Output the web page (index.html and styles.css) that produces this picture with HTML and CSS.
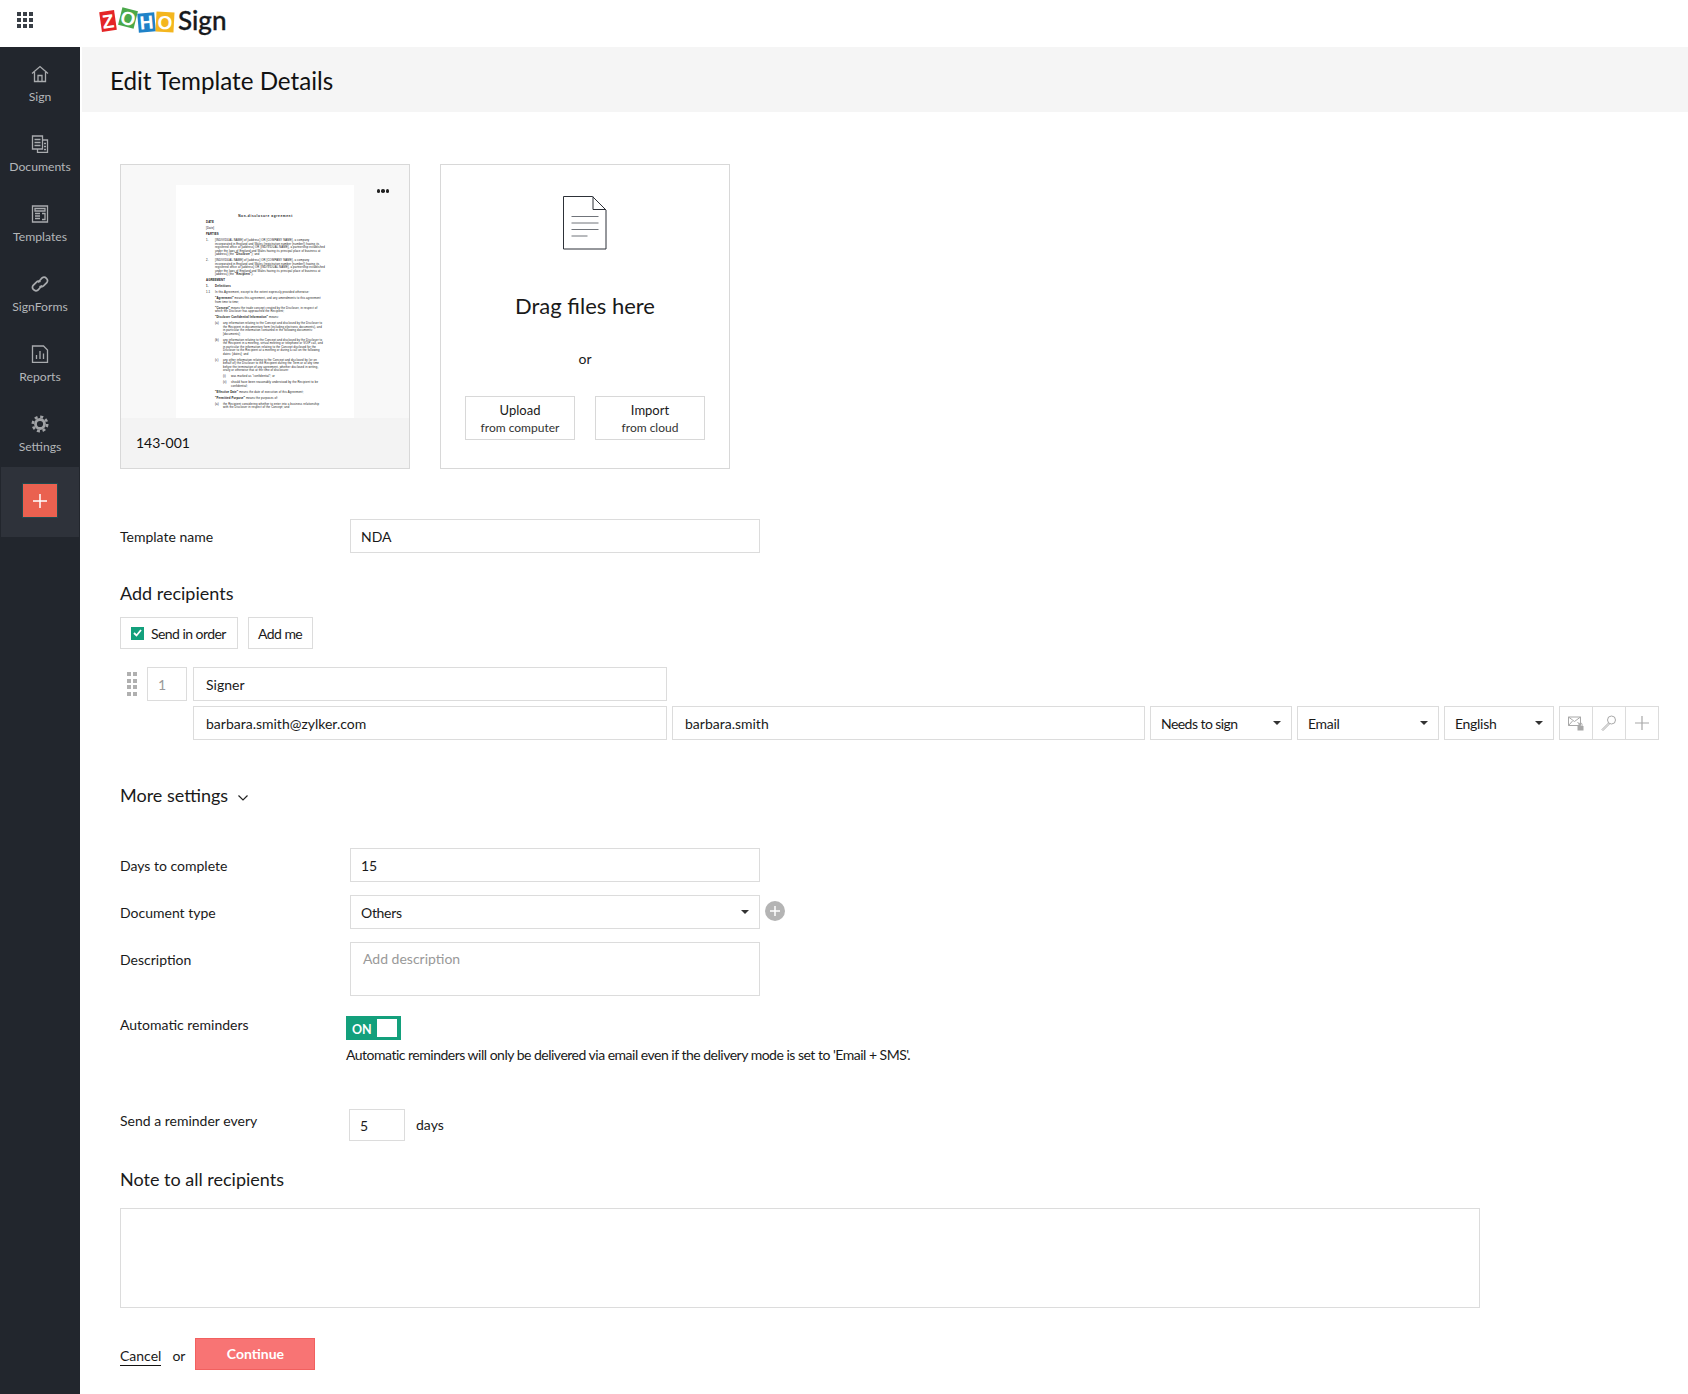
FILE: index.html
```html
<!DOCTYPE html>
<html lang="en">
<head>
<meta charset="utf-8">
<title>Edit Template Details</title>
<link rel="stylesheet" href="styles.css">
</head>
<body>
<header class="topbar">
  <svg class="waffle" width="16" height="16" viewBox="0 0 16 16"><g fill="#3a3f47"><rect width="4" height="4"/><rect x="6" width="4" height="4"/><rect x="12" width="4" height="4"/><rect y="6" width="4" height="4"/><rect x="6" y="6" width="4" height="4"/><rect x="12" y="6" width="4" height="4"/><rect y="12" width="4" height="4"/><rect x="6" y="12" width="4" height="4"/><rect x="12" y="12" width="4" height="4"/></g></svg>
  <svg class="logo" width="76" height="28" viewBox="0 0 76 28">
    <g transform="rotate(-8 9 15)"><rect x="1.500" y="5" width="15" height="20" fill="#e42527"/><text x="9" y="22" class="logo-letter">Z</text></g>
    <g transform="rotate(14 29 12)"><rect x="21" y="3" width="16" height="18" fill="#4aa84a"/><text x="29" y="19" class="logo-letter">O</text></g>
    <g transform="rotate(-5 47 16)"><rect x="39" y="7" width="17" height="19" fill="#1f82c8"/><text x="47.500" y="23" class="logo-letter">H</text></g>
    <g transform="rotate(3 65 16)"><rect x="57" y="6" width="18" height="20" fill="#f4b61f"/><text x="66" y="23" class="logo-letter">O</text></g>
  </svg>
  <span class="brand">Sign</span>
</header>
<div class="shell">
  <nav class="sidebar">
    <a class="nav-item">
      <svg class="nav-icon" width="18" height="18" viewBox="0 0 18 18"><path d="M1 8.500 9 1.500l8 7M3.500 7v9.500h11V7M7 16.500v-6h4v6"/></svg>
      <span>Sign</span>
    </a>
    <a class="nav-item">
      <svg class="nav-icon" width="18" height="18" viewBox="0 0 18 18"><path d="M1.500 1h10v13h-10zM11.500 5h5v12.500h-10V14M3.500 4.500h6M3.500 7.500h6M3.500 10.500h6M13 8.500h2M13 11.500h2M13 14.500h2"/></svg>
      <span>Documents</span>
    </a>
    <a class="nav-item">
      <svg class="nav-icon" width="18" height="18" viewBox="0 0 18 18"><path d="M1.500 1h15v16h-15zM4 3.500h10v2.500H4zM4 8.500h5M4 11h5M4 13.500h5M11 8.500h3v6h-3"/></svg>
      <span>Templates</span>
    </a>
    <a class="nav-item">
      <svg class="nav-icon link-icon" width="18" height="18" viewBox="0 0 18 18"><path d="M7 7.500 11 3a3.400 3.400 0 0 1 4.800 4.700l-3 3a3.400 3.400 0 0 1-4.300.5M11 10.500 7 15a3.400 3.400 0 0 1-4.800-4.700l3-3a3.400 3.400 0 0 1 4.300-.5"/></svg>
      <span>SignForms</span>
    </a>
    <a class="nav-item">
      <svg class="nav-icon" width="18" height="18" viewBox="0 0 18 18"><path d="M1.500 1h11l4 4v12.500h-15zM5.500 14V10M9 14V6M12.500 14V8.500"/></svg>
      <span>Reports</span>
    </a>
    <a class="nav-item">
      <svg width="18" height="18" viewBox="0 0 18 18"><circle cx="9" cy="9" r="4.500" fill="none" stroke="#a0a2a5" stroke-width="2.800"/><circle cx="9" cy="9" r="7.200" fill="none" stroke="#a0a2a5" stroke-width="2.600" stroke-dasharray="3 2.650"/></svg>
      <span>Settings</span>
    </a>
    <div class="nav-add">
      <button class="add-btn" type="button"><svg width="14" height="14" viewBox="0 0 14 14"><path d="M7 0v14M0 7h14" stroke="#fff" stroke-width="1.500"/></svg></button>
    </div>
  </nav>

  <main class="main">
    <div class="page-head"><h1>Edit Template Details</h1></div>
    <div class="content">
      <section class="cards">
        <article class="card thumb-card">
          <div class="thumb-area">
            <div class="doc-page">
              <p class="doc-title">Non-disclosure agreement</p>
              <p class="doc-b">DATE</p>
              <p>[Date]</p>
              <p class="doc-b">PARTIES</p>
              <p class="doc-item"><span class="mk">1.</span><span>[INDIVIDUAL NAME] of [address] OR [COMPANY NAME], a company incorporated in England and Wales (registration number [number]) having its registered office at [address] OR [INDIVIDUAL NAME], a partnership established under the laws of England and Wales having its principal place of business at [address] (the <b>"Discloser"</b>); and</span></p>
              <p class="doc-item"><span class="mk">2.</span><span>[INDIVIDUAL NAME] of [address] OR [COMPANY NAME], a company incorporated in England and Wales (registration number [number]) having its registered office at [address] OR [INDIVIDUAL NAME], a partnership established under the laws of England and Wales having its principal place of business at [address] (the <b>"Recipient"</b>).</span></p>
              <p class="doc-b">AGREEMENT</p>
              <p class="doc-item doc-b"><span class="mk">1.</span><span>Definitions</span></p>
              <p class="doc-item"><span class="mk">1.1</span><span>In this Agreement, except to the extent expressly provided otherwise:</span></p>
              <p class="doc-l1"><b>"Agreement"</b> means this agreement, and any amendments to this agreement from time to time;</p>
              <p class="doc-l1"><b>"Concept"</b> means the trade concept created by the Discloser, in respect of which the Discloser has approached the Recipient;</p>
              <p class="doc-l1"><b>"Discloser Confidential Information"</b> means:</p>
              <p class="doc-item doc-l1"><span class="mk mk2">(a)</span><span>any information relating to the Concept and disclosed by the Discloser to the Recipient in documentary form (including electronic documents), and in particular the information contained in the following documents: [documents];</span></p>
              <p class="doc-item doc-l1"><span class="mk mk2">(b)</span><span>any information relating to the Concept and disclosed by the Discloser to the Recipient in a meeting, virtual meeting or telephone or VOIP call, and in particular the information relating to the Concept disclosed for the Discloser to the Recipient at a meeting or during a call on the following dates: [dates]; and</span></p>
              <p class="doc-item doc-l1"><span class="mk mk2">(c)</span><span>any other information relating to the Concept and disclosed by (or on behalf of) the Discloser to the Recipient during the Term or at any time before the termination of any agreement, whether disclosed in writing, orally or otherwise that at the time of disclosure:</span></p>
              <p class="doc-item doc-l2"><span class="mk mk2">(i)</span><span>was marked as "confidential"; or</span></p>
              <p class="doc-item doc-l2"><span class="mk mk2">(ii)</span><span>should have been reasonably understood by the Recipient to be confidential;</span></p>
              <p class="doc-l1"><b>"Effective Date"</b> means the date of execution of this Agreement;</p>
              <p class="doc-l1"><b>"Permitted Purpose"</b> means the purposes of:</p>
              <p class="doc-item doc-l1"><span class="mk mk2">(a)</span><span>the Recipient considering whether to enter into a business relationship with the Discloser in respect of the Concept; and</span></p>
            </div>
            <span class="more-dots"><i></i><i></i><i></i></span>
          </div>
          <div class="thumb-foot">143-001</div>
        </article>
        <article class="card drop-card">
          <svg class="file-icon" width="44" height="54" viewBox="0 0 44 54"><path d="M.500.500h29l13.500 13.500v39H.500zM30 .500V13.500h13" fill="#fff" stroke="#2d3138"/><path d="M8.500 20.500h27M8.500 27h27M8.500 33.500h27M8.500 40h16" stroke="#70747a" fill="none"/></svg>
          <h2 class="drop-title">Drag files here</h2>
          <p class="drop-or">or</p>
          <div class="drop-actions">
            <button class="drop-btn" type="button"><span>Upload</span><small>from computer</small></button>
            <button class="drop-btn" type="button"><span>Import</span><small>from cloud</small></button>
          </div>
        </article>
      </section>

      <div class="form-row first-row">
        <label class="form-label">Template name</label>
        <div class="field field-main">NDA</div>
      </div>

      <h3 class="section-title add-title">Add recipients</h3>
      <div class="recipient-tools">
        <div class="tool-btn send-order"><span class="check"><svg width="9" height="8" viewBox="0 0 9 8"><path d="M1 4l2.500 2.500L8 1" fill="none" stroke="#fff" stroke-width="1.800"/></svg></span>Send in order</div>
        <div class="tool-btn add-me">Add me</div>
      </div>

      <div class="recipient">
        <div class="recipient-line">
          <span class="drag"><i></i><i></i><i></i><i></i><i></i><i></i><i></i><i></i></span>
          <div class="field num">1</div>
          <div class="field wide-field">Signer</div>
        </div>
        <div class="recipient-line second-line">
          <div class="field wide-field">barbara.smith@zylker.com</div>
          <div class="field name-field">barbara.smith</div>
          <div class="field select sel-action">Needs to sign</div>
          <div class="field select sel-mode">Email</div>
          <div class="field select sel-lang">English</div>
          <div class="icon-group">
            <span class="icon-cell"><svg width="16" height="16" viewBox="0 0 16 16"><path d="M.500 2h12v8.500H.500zM.500 2l6 4.500 6-4.500M.500 10.500l4-4.500M12.500 10.500l-3-3.500" fill="none" stroke="#a8a8a8"/><rect x="9.500" y="11" width="6" height="4.500" fill="#a8a8a8"/><path d="M11 11V9.500a1.500 1.500 0 0 1 3 0V11" fill="none" stroke="#a8a8a8"/></svg></span>
            <span class="icon-cell"><svg width="16" height="16" viewBox="0 0 16 16"><circle cx="10.500" cy="5" r="4" fill="none" stroke="#a8a8a8"/><path d="M7.500 8 1 14.500l1 1L8.500 9" fill="none" stroke="#a8a8a8"/></svg></span>
            <span class="icon-cell"><svg width="14" height="14" viewBox="0 0 14 14"><path d="M7 0v14M0 7h14" stroke="#a8a8a8" stroke-width="1.200"/></svg></span>
          </div>
        </div>
      </div>

      <h3 class="section-title more-title">More settings <svg class="chev" width="10" height="6" viewBox="0 0 10 6"><path d="M.500.500 5 5 9.500.500" fill="none" stroke="#222" stroke-width="1.200"/></svg></h3>

      <div class="form-row days-row">
        <label class="form-label">Days to complete</label>
        <div class="field field-main">15</div>
      </div>
      <div class="form-row tight-row">
        <label class="form-label">Document type</label>
        <div class="field field-main select">Others</div>
        <span class="circle-plus"><svg width="10" height="10" viewBox="0 0 10 10"><path d="M5 0v10M0 5h10" stroke="#fff" stroke-width="1.500"/></svg></span>
      </div>
      <div class="form-row tight-row">
        <label class="form-label">Description</label>
        <div class="field field-main desc">Add description</div>
      </div>
      <div class="form-row reminder-row">
        <label class="form-label compact-label">Automatic reminders</label>
        <div class="reminder-col">
          <div class="toggle"><span>ON</span><i></i></div>
          <p class="reminder-note">Automatic reminders will only be delivered via email even if the delivery mode is set to 'Email + SMS'.</p>
        </div>
      </div>
      <div class="form-row every-row">
        <label class="form-label every-label">Send a reminder every</label>
        <div class="field every-input">5</div>
        <span class="days-unit">days</span>
      </div>

      <h3 class="section-title note-title">Note to all recipients</h3>
      <div class="note-box"></div>

      <div class="actions">
        <a class="cancel">Cancel</a>
        <span class="or">or</span>
        <button class="continue" type="button">Continue</button>
      </div>
    </div>
  </main>
</div>
</body>
</html>
```
FILE: styles.css
```css
* { box-sizing: border-box; }
html, body { margin: 0; padding: 0; height: 1394px; overflow: hidden; background: #fff; }
body { font-family: Lato, "Open Sans", sans-serif; font-size: 14px; color: #1a1a1a; }

.topbar { height: 47px; display: flex; align-items: center; padding-left: 17px; background: #fff; }
.waffle { flex: none; margin-top: -7px; }
.logo { flex: none; margin-left: 66px; margin-top: -7px; }
.logo-letter { font-family: "Liberation Sans", sans-serif; font-weight: 700; font-size: 19px; fill: #fff; text-anchor: middle; }
.brand { margin-left: 3px; margin-top: -7px; font-size: 26px; font-weight: 500; color: #17191c; line-height: 1; -webkit-text-stroke: .35px #17191c; }

.shell { display: flex; height: 1347px; }
.sidebar { width: 80px; flex: none; background: #22262d; display: flex; flex-direction: column; }
.nav-item { height: 70px; display: flex; flex-direction: column; align-items: center; padding-top: 18px; color: #b4b6b9; font-size: 12.200px; line-height: 16px; }
.nav-item svg { display: block; margin-bottom: 6px; }
.nav-icon { fill: none; stroke: #a9abae; stroke-width: 1.300; }
.link-icon { stroke-width: 1.700; }
.nav-add { height: 70px; margin: 0 1px; background: #2e323a; display: flex; justify-content: center; padding-top: 16px; }
.add-btn { width: 36px; height: 35px; padding: 0; border: 1px solid #1f4a4f; background: #ea6150; display: flex; align-items: center; justify-content: center; }

.main { flex: 1; margin-left: 2px; min-width: 0; }
.page-head { height: 65px; background: #f5f5f5; padding: 2px 0 0 28px; display: flex; align-items: center; }
.page-head h1 { margin: 0; font-size: 24.200px; font-weight: 400; color: #111; }
.content { padding: 52px 0 0 38px; }

.cards { display: flex; gap: 30px; }
.card { width: 290px; height: 305px; border: 1px solid #d8d8d8; }
.thumb-card { display: flex; flex-direction: column; background: #f8f8f8; }
.thumb-area { position: relative; height: 253px; display: flex; justify-content: center; padding-top: 20px; }
.doc-page { width: 178px; height: 233px; background: #fff; padding: 29px 29px 0 30px; overflow: hidden; font-family: "Liberation Sans", sans-serif; font-size: 2.800px; letter-spacing: .13px; line-height: 3.500px; color: #111; }
.doc-page p { margin: 0 0 2.500px; }
.doc-page .doc-title { text-align: center; font-weight: 700; font-size: 3.200px; line-height: 4px; letter-spacing: .6px; margin-bottom: 3px; }
.doc-b { font-weight: 700; }
.doc-item { display: flex; }
.mk { flex: none; width: 9px; }
.mk2 { width: 8px; }
.doc-page .doc-l1 { padding-left: 9px; }
.doc-page .doc-l2 { padding-left: 17px; }
.more-dots { position: absolute; top: 24px; right: 20px; display: flex; gap: 1px; }
.more-dots i { width: 3.500px; height: 3.500px; border-radius: 50%; background: #222; }
.thumb-foot { flex: 1; background: #f3f3f3; padding: 15px 0 0 15px; font-size: 14px; line-height: 20px; color: #111; }

.drop-card { display: flex; flex-direction: column; align-items: center; padding-top: 31px; background: #fff; }
.file-icon { display: block; }
.drop-title { margin: 41px 0 0; font-size: 22px; font-weight: 400; line-height: 30px; color: #1a1a1a; }
.drop-or { margin: 30px 0 0; line-height: 16px; font-size: 14px; }
.drop-actions { display: flex; gap: 20px; margin-top: 29px; }
.drop-btn { width: 110px; height: 44px; padding: 2px 0 0; border: 1px solid #d8d8d8; background: #fff; display: flex; flex-direction: column; align-items: center; justify-content: center; font-family: inherit; font-size: 13px; line-height: 18px; color: #1a1a1a; }
.drop-btn small { font-size: 12px; line-height: 18px; color: #333; }

.form-row { display: flex; align-items: flex-start; }
.form-label { width: 230px; flex: none; padding-top: 8px; line-height: 20px; font-size: 14px; color: #1a1a1a; }
.first-row { margin-top: 50px; }
.field { height: 34px; border: 1px solid #dcdcdc; background: #fff; display: flex; align-items: center; padding-left: 10px; font-size: 14px; color: #1a1a1a; position: relative; }
.field-main { width: 410px; }
.select { letter-spacing: -.3px; }
.select::after { content: ""; position: absolute; right: 10px; top: 14px; border-left: 4px solid transparent; border-right: 4px solid transparent; border-top: 4.500px solid #333; }

.section-title { margin: 0; font-size: 18px; font-weight: 400; line-height: 24px; color: #1a1a1a; }
.add-title { margin-top: 28px; }
.recipient-tools { display: flex; gap: 10px; margin-top: 12px; }
.tool-btn { height: 32px; border: 1px solid #dcdcdc; display: flex; align-items: center; font-size: 14px; letter-spacing: -.55px; }
.send-order { width: 118px; padding-left: 10px; }
.check { width: 13px; height: 13px; margin-right: 7px; background: #13a07c; display: flex; align-items: center; justify-content: center; }
.add-me { width: 65px; padding-left: 9px; }

.recipient { margin-top: 18px; }
.recipient-line { display: flex; }
.second-line { margin-top: 5px; margin-left: 73px; gap: 5px; }
.drag { width: 10px; margin: 5px 0 0 7px; height: 24px; display: grid; grid-template-columns: 4px 4px; column-gap: 2px; row-gap: 2.600px; grid-auto-rows: 4px; }
.drag i { background: #b0b0b0; }
.num { width: 40px; margin-left: 10px; color: #999; padding-left: 10px; }
.wide-field { width: 474px; padding-left: 12px; }
.recipient-line > .wide-field:nth-child(3) { margin-left: 6px; }
.name-field { width: 473px; padding-left: 12px; }
.sel-action { width: 142px; letter-spacing: -.55px; }
.sel-mode { width: 142px; }
.sel-lang { width: 110px; }
.icon-group { width: 100px; height: 34px; border: 1px solid #dcdcdc; display: flex; }
.icon-cell { flex: 1; display: flex; align-items: center; justify-content: center; border-left: 1px solid #dcdcdc; }
.icon-cell:first-child { border-left: 0; }

.more-title { margin-top: 43px; display: flex; align-items: center; }
.chev { margin: 6px 0 0 10px; }
.days-row { margin-top: 41px; }
.tight-row { margin-top: 13px; }
.circle-plus { width: 20px; height: 20px; margin: 6px 0 0 5px; border-radius: 50%; background: #b4b4b4; display: flex; align-items: center; justify-content: center; }
.desc { height: 54px; align-items: flex-start; padding: 6px 0 0 12px; color: #999; line-height: 20px; }

.reminder-row { margin-top: 20px; }
.compact-label { padding-top: 0; line-height: 18px; }
.reminder-col { margin-left: -4px; }
.toggle { width: 55px; height: 24px; background: #13a07c; position: relative; color: #fff; font-size: 12.500px; font-weight: 700; line-height: 27px; padding-left: 6px; }
.toggle i { position: absolute; top: 3px; right: 4px; width: 20px; height: 18px; background: #fff; }
.reminder-note { margin: 6px 0 0; font-size: 14px; line-height: 18px; letter-spacing: -.5px; color: #1a1a1a; white-space: nowrap; }

.every-row { margin-top: 45px; }
.every-label { width: 229px; padding-top: 2px; }
.every-input { width: 56px; height: 32px; }
.days-unit { margin-left: 11px; line-height: 32px; }

.note-title { margin-top: 26px; }
.note-box { width: 1360px; height: 100px; margin-top: 17px; border: 1px solid #dcdcdc; }

.actions { display: flex; align-items: flex-start; margin-top: 30px; }
.cancel { margin-top: 9px; line-height: 18px; border-bottom: 1px solid #111; font-size: 14px; color: #1a1a1a; }
.or { margin: 9px 0 0 11px; line-height: 18px; }
.continue { width: 120px; height: 32px; margin-left: 10px; border: 1px solid #f2605f; background: #f87474; color: #fff; font-family: inherit; font-size: 14px; font-weight: 700; padding: 0 0 2px; }
```
